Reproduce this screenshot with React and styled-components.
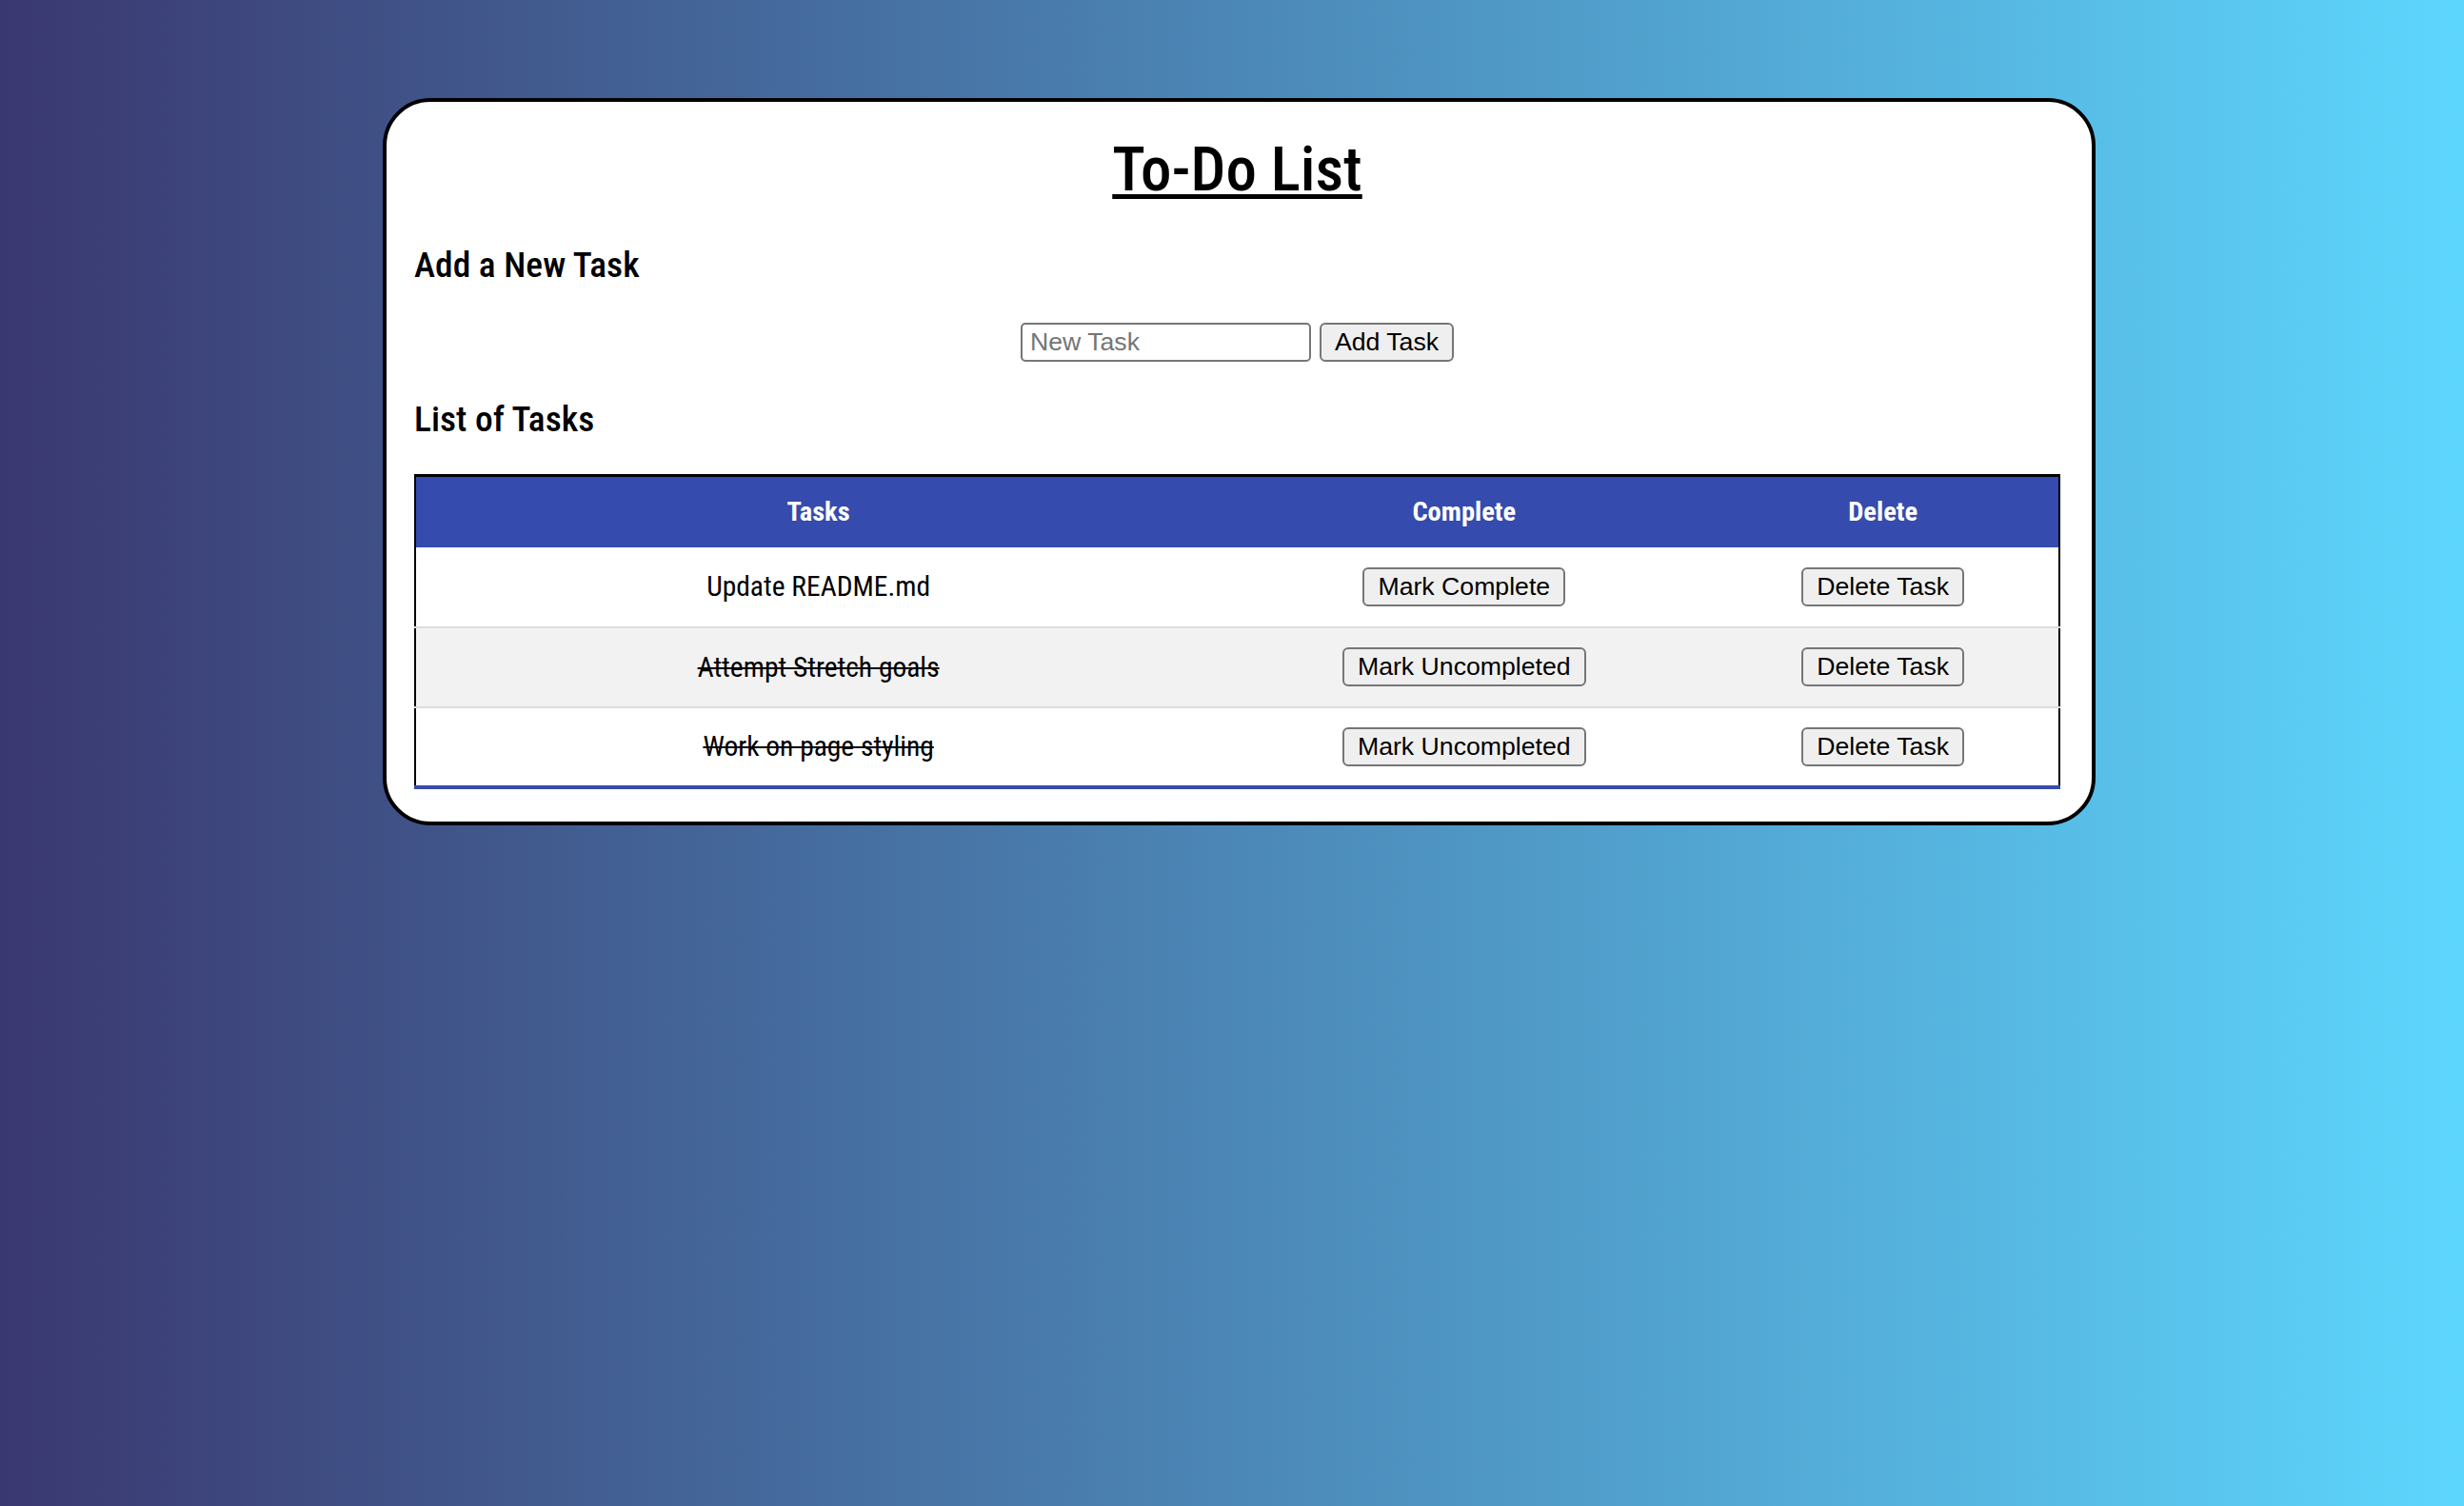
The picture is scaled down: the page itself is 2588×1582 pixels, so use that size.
import React from "react";
import styled, { createGlobalStyle } from "styled-components";

const HEAD = `Roboto, "Open Sans", sans-serif`;
const UI = `"Liberation Sans", Arial, sans-serif`;

const Global = createGlobalStyle`
  html, body { margin: 0; padding: 0; }
  * { box-sizing: border-box; }
`;

const Page = styled.div`
  min-height: 100vh;
  padding: 103px 0 0 15px;
  display: flex;
  flex-direction: column;
  align-items: center;
  background: linear-gradient(to right, #3a3870 0%, #5dd6fd 100%);
  font-family: ${HEAD};
`;

const Card = styled.main`
  width: 1799px;
  border: 4px solid #000;
  border-radius: 50px;
  background: #fff;
  padding: 0 33px 34px 29px;
`;

const Title = styled.h1`
  margin: 33px 0 0;
  font: 500 65px/76px ${HEAD};
  font-stretch: 87.5%;
  text-align: center;
  text-decoration: underline;
  text-decoration-thickness: 5px;
  text-underline-offset: 4px;
  color: #000;
`;

const SectionHeading = styled.h2`
  margin: ${(p) => p.$gap}px 0 0;
  font: 500 37.5px/44px ${HEAD};
  font-stretch: 87.5%;
  color: #000;
`;

const AddRow = styled.div`
  margin-top: 39px;
  display: flex;
  justify-content: center;
  gap: 9px;
`;

const TaskInput = styled.input`
  width: 305px;
  height: 41px;
  border: 2px solid #767676;
  border-radius: 5px;
  padding: 0 8px;
  font: 400 26.67px ${UI};
  color: #000;
  background: #fff;
  &::placeholder { color: #757575; }
`;

const Button = styled.button`
  height: 41px;
  padding: 0 14px;
  border: 2px solid #767676;
  border-radius: 6px;
  background: #efefef;
  color: #000;
  font: 400 26.67px ${UI};
  cursor: pointer;
`;

const Table = styled.table`
  margin-top: 36px;
  width: 100%;
  border-collapse: collapse;
  border-top: 3px solid #000;
  border-left: 2px solid #000;
  border-right: 2px solid #000;
  border-bottom: 4px solid #354bad;
`;

const Col = styled.col`
  width: ${(p) => p.$w};
`;

const HeadRow = styled.tr`
  background: #354bad;
`;

const Th = styled.th`
  height: 75px;
  padding: 0;
  color: #fff;
  font: 700 28.5px ${HEAD};
  font-stretch: 87.5%;
  text-align: center;
  vertical-align: middle;
`;

const Row = styled.tr`
  background: ${(p) => (p.$shade ? "#f2f2f2" : "#fff")};
`;

const Td = styled.td`
  height: 84px;
  padding: 0;
  border-bottom: 2px solid #ddd;
  text-align: center;
  vertical-align: middle;
  font: 400 29.5px ${HEAD};
  font-stretch: 87.5%;
  color: #000;
`;

const TaskText = styled.span`
  text-decoration: ${(p) => (p.$done ? "line-through" : "none")};
`;

const tasks = [
  { text: "Update README.md", done: false },
  { text: "Attempt Stretch goals", done: true },
  { text: "Work on page styling", done: true },
];

export default function App() {
  return (
    <>
      <Global />
      <Page>
        <Card>
          <Title>To-Do List</Title>
          <SectionHeading $gap={40}>Add a New Task</SectionHeading>
          <AddRow>
            <TaskInput placeholder="New Task" />
            <Button>Add Task</Button>
          </AddRow>
          <SectionHeading $gap={38}>List of Tasks</SectionHeading>
          <Table>
            <colgroup>
              <Col $w="49%" />
              <Col $w="29.6%" />
              <Col $w="21.4%" />
            </colgroup>
            <thead>
              <HeadRow>
                <Th>Tasks</Th>
                <Th>Complete</Th>
                <Th>Delete</Th>
              </HeadRow>
            </thead>
            <tbody>
              {tasks.map((t, i) => (
                <Row key={t.text} $shade={i % 2 === 1}>
                  <Td>
                    <TaskText $done={t.done}>{t.text}</TaskText>
                  </Td>
                  <Td>
                    <Button>{t.done ? "Mark Uncompleted" : "Mark Complete"}</Button>
                  </Td>
                  <Td>
                    <Button>Delete Task</Button>
                  </Td>
                </Row>
              ))}
            </tbody>
          </Table>
        </Card>
      </Page>
    </>
  );
}
